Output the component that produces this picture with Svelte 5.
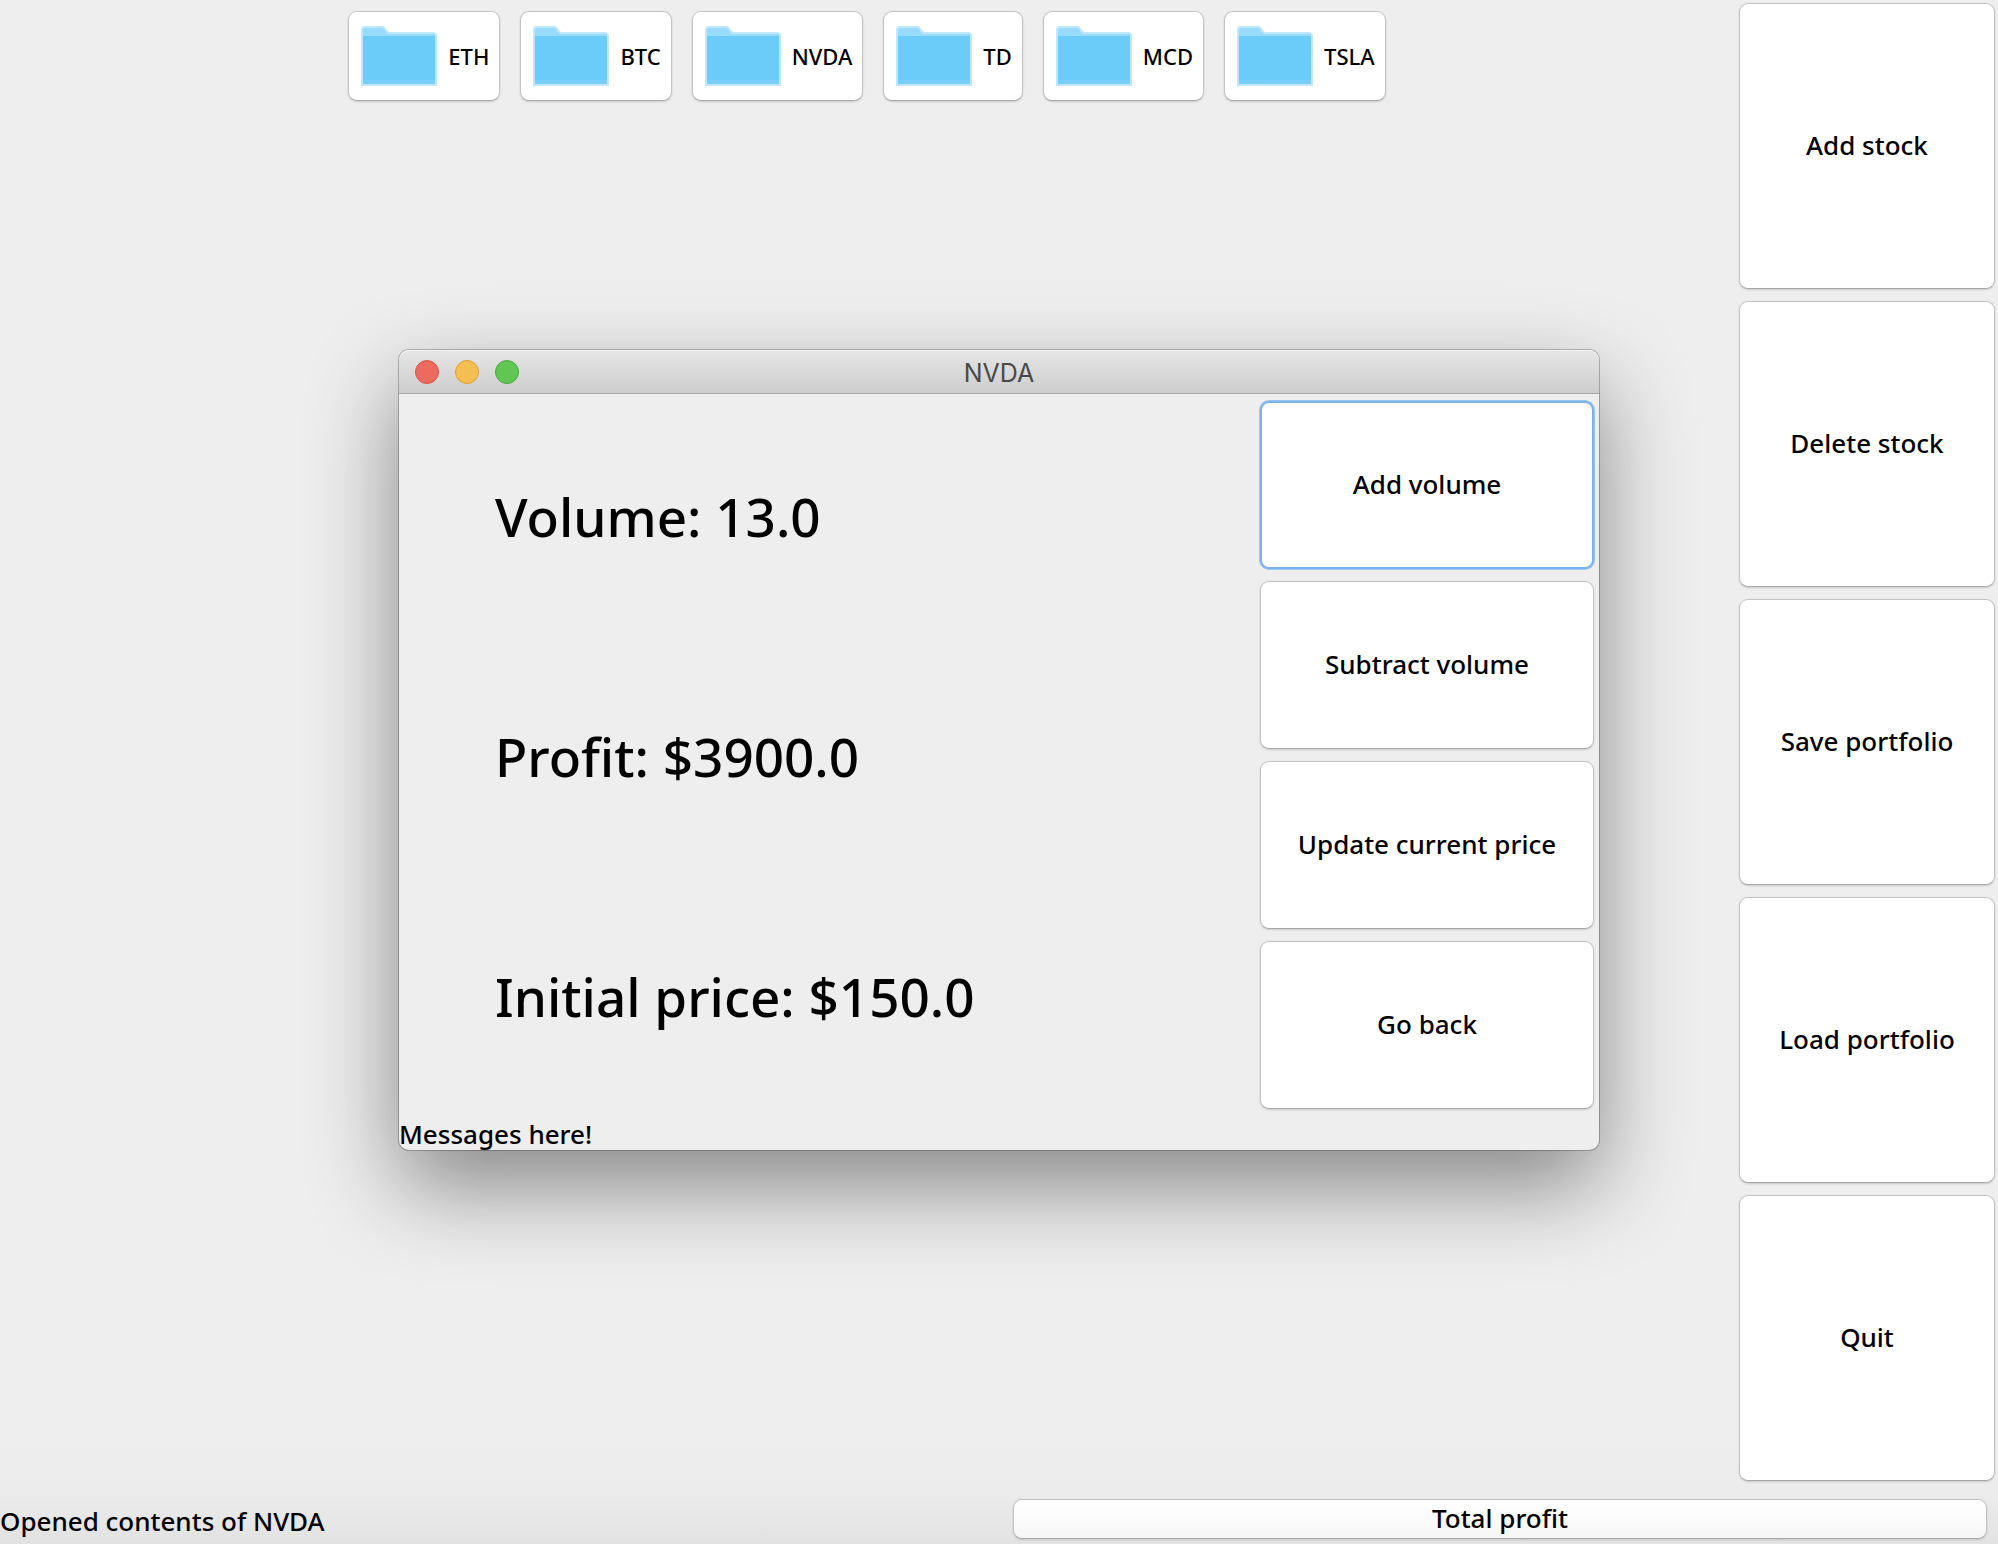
<script>
  const stocks = ['ETH', 'BTC', 'NVDA', 'TD', 'MCD', 'TSLA'];
  const portfolioActions = ['Add stock', 'Delete stock', 'Save portfolio', 'Load portfolio', 'Quit'];
  const stockActions = ['Add volume', 'Subtract volume', 'Update current price', 'Go back'];
  const details = ['Volume: 13.0', 'Profit: $3900.0', 'Initial price: $150.0'];
  const lights = [
    { name: 'Close', kind: 'close' },
    { name: 'Minimize', kind: 'minimize' },
    { name: 'Zoom', kind: 'zoom' }
  ];
  let focused = $state('Add volume');
</script>

<div class="app">
  <div class="upper">
    <main class="stocks">
      {#each stocks as stock}
        <button class="btn stock">
          <svg class="folder" viewBox="0 0 76 60" aria-hidden="true">
            <path d="M0 4Q0 0 4 0H21Q24 0 25 3L28 6H72Q76 6 76 10V60H0Z" fill="#bfe8fe" />
            <path d="M2 4Q2 2 4 2H21Q23 2 24 5L27 8H74V12H2Z" fill="#98dbff" />
            <path d="M2 10H74V58H2Z" fill="#6bcbf9" />
            <path d="M2 54H74V58H2Z" fill="#77cefa" />
          </svg>
          <span>{stock}</span>
        </button>
      {/each}
    </main>
    <nav class="sidebar" aria-label="Portfolio">
      {#each portfolioActions as action}
        <button class="btn">{action}</button>
      {/each}
    </nav>
  </div>

  <footer class="footer">
    <p class="status">Opened contents of NVDA</p>
    <button class="btn total">Total profit</button>
  </footer>

  <div class="window" role="dialog" aria-labelledby="window-title">
    <header class="titlebar">
      <div class="lights">
        {#each lights as light}
          <button class="light {light.kind}" aria-label={light.name}></button>
        {/each}
      </div>
      <h1 id="window-title">NVDA</h1>
    </header>
    <div class="content">
      <div class="details">
        {#each details as line}
          <p>{line}</p>
        {/each}
      </div>
      <div class="actions">
        {#each stockActions as action}
          <button class="btn" class:focused={focused === action} onclick={() => (focused = action)}>
            {action}
          </button>
        {/each}
      </div>
    </div>
    <p class="message">Messages here!</p>
  </div>
</div>

<style>
  :global(body) {
    margin: 0;
    background: #eeeeee;
  }

  .app {
    position: relative;
    box-sizing: border-box;
    min-height: 100vh;
    display: flex;
    flex-direction: column;
    overflow: hidden;
    background: linear-gradient(to top, #e2e2e2 0, #ebebeb 48px, #eeeeee 100px);
    color: #000;
    font-family: 'Lucida Grande', 'Noto Sans', sans-serif;
    font-size: 26px;
    font-weight: 500;
    line-height: 32px;
  }

  p,
  h1 {
    margin: 0;
  }

  .btn {
    box-sizing: border-box;
    margin: 0;
    padding: 0 8px 2px;
    border: 1px solid #c3c3c3;
    border-bottom-color: #a9a9a9;
    border-radius: 9px;
    background: #fff;
    box-shadow: 0 1px 2px rgba(0, 0, 0, 0.16);
    color: inherit;
    font: inherit;
  }

  .btn:focus {
    outline: none;
  }

  .upper {
    flex: 1;
    display: flex;
  }

  .stocks {
    flex: 1;
    display: flex;
    flex-wrap: wrap;
    justify-content: center;
    align-content: flex-start;
    gap: 20px;
    padding: 11px 0;
  }

  .stock {
    display: flex;
    align-items: center;
    gap: 11px;
    height: 90px;
    padding: 0 10px 0 12px;
    font-size: 22px;
  }

  .folder {
    width: 76px;
    height: 60px;
  }

  .sidebar {
    width: 256px;
    display: flex;
    flex-direction: column;
    gap: 12px;
    padding: 3px 3px 6px 5px;
  }

  .sidebar .btn {
    flex: 1;
  }

  .footer {
    display: grid;
    grid-template-columns: 1fr 1fr;
    align-items: center;
    padding: 12px 0 5px;
  }

  .status {
    padding-top: 4px;
  }

  .total {
    height: 40px;
    margin: 0 11px 0 14px;
    background: linear-gradient(#fff, #f6f6f6);
  }

  .window {
    position: absolute;
    top: 350px;
    left: 0;
    right: 0;
    box-sizing: border-box;
    width: min(1200px, 96%);
    margin: 0 auto;
    border-radius: 10px;
    background: #eeeeee;
    box-shadow:
      0 0 0 1px rgba(0, 0, 0, 0.24),
      0 36px 90px rgba(0, 0, 0, 0.44);
  }

  .titlebar {
    display: grid;
    grid-template-columns: 1fr auto 1fr;
    align-items: center;
    box-sizing: border-box;
    height: 44px;
    padding: 0 16px;
    border-bottom: 1px solid #a8a8a8;
    border-radius: 10px 10px 0 0;
    background: linear-gradient(#e6e6e6, #cdcdcd);
    box-shadow: inset 0 1px 0 #f4f4f4;
  }

  .titlebar h1 {
    padding-top: 2px;
    color: #4a4a4a;
    font-family: Inter, sans-serif;
    font-size: 25px;
    font-weight: 400;
    line-height: 32px;
  }

  .lights {
    display: flex;
    gap: 16px;
  }

  .light {
    box-sizing: border-box;
    width: 24px;
    height: 24px;
    padding: 0;
    border: 1px solid;
    border-radius: 50%;
  }

  .close {
    border-color: #d6534a;
    background: #ed6a5f;
  }

  .minimize {
    border-color: #dba03c;
    background: #f6be50;
  }

  .zoom {
    border-color: #4ba73f;
    background: #62c655;
  }

  .content {
    display: flex;
  }

  .details {
    flex: 1;
    display: grid;
    grid-template-rows: repeat(3, 240px);
    align-items: center;
    padding-left: 96px;
    font-size: 53px;
    line-height: 64px;
  }

  .details p {
    padding-top: 6px;
  }

  .actions {
    width: 334px;
    display: grid;
    grid-auto-rows: 168px;
    gap: 12px;
    padding: 7px 5px 5px;
  }

  .focused {
    border: 2px solid #7eb2ea;
    box-shadow: 0 0 0 1px #9cc6f2;
  }

  .message {
    padding-top: 4px;
  }
</style>
